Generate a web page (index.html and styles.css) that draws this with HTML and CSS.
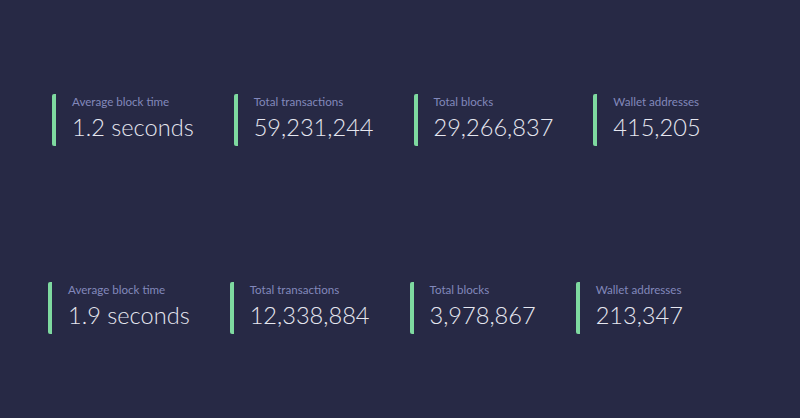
FILE: index.html
```html
<!DOCTYPE html>
<html>
<head>
<meta charset="utf-8">
<link rel="stylesheet" href="styles.css">
</head>
<body>
<section class="band band-one">
  <div class="stats">
    <div class="stat"><div class="label">Average block time</div><div class="value">1.2 seconds</div></div>
    <div class="stat"><div class="label">Total transactions</div><div class="value">59,231,244</div></div>
    <div class="stat"><div class="label">Total blocks</div><div class="value">29,266,837</div></div>
    <div class="stat"><div class="label">Wallet addresses</div><div class="value">415,205</div></div>
  </div>
</section>
<section class="band band-two">
  <div class="stats">
    <div class="stat"><div class="label">Average block time</div><div class="value">1.9 seconds</div></div>
    <div class="stat"><div class="label">Total transactions</div><div class="value">12,338,884</div></div>
    <div class="stat"><div class="label">Total blocks</div><div class="value">3,978,867</div></div>
    <div class="stat"><div class="label">Wallet addresses</div><div class="value">213,347</div></div>
  </div>
</section>
</body>
</html>
```
FILE: styles.css
```css
html, body {
  margin: 0;
  padding: 0;
  background: #272945;
  height: 100%;
}
body {
  font-family: "Lato", "Open Sans", sans-serif;
  overflow: hidden;
}
.band-one {
  padding: 94px 0 0 52px;
}
.band-two {
  padding: 136px 0 0 48px;
}
.stats {
  display: flex;
  gap: 40px;
}
.stat {
  border-left: 4px solid #7ed9a0;
  border-radius: 2px;
  padding-left: 16px;
  height: 52px;
  box-sizing: border-box;
}
.label {
  color: #8288bb;
  font-size: 11.6px;
  line-height: 16px;
}
.value {
  color: #e6e7f0;
  font-size: 23.6px;
  font-weight: 300;
  line-height: 34px;
}
```
